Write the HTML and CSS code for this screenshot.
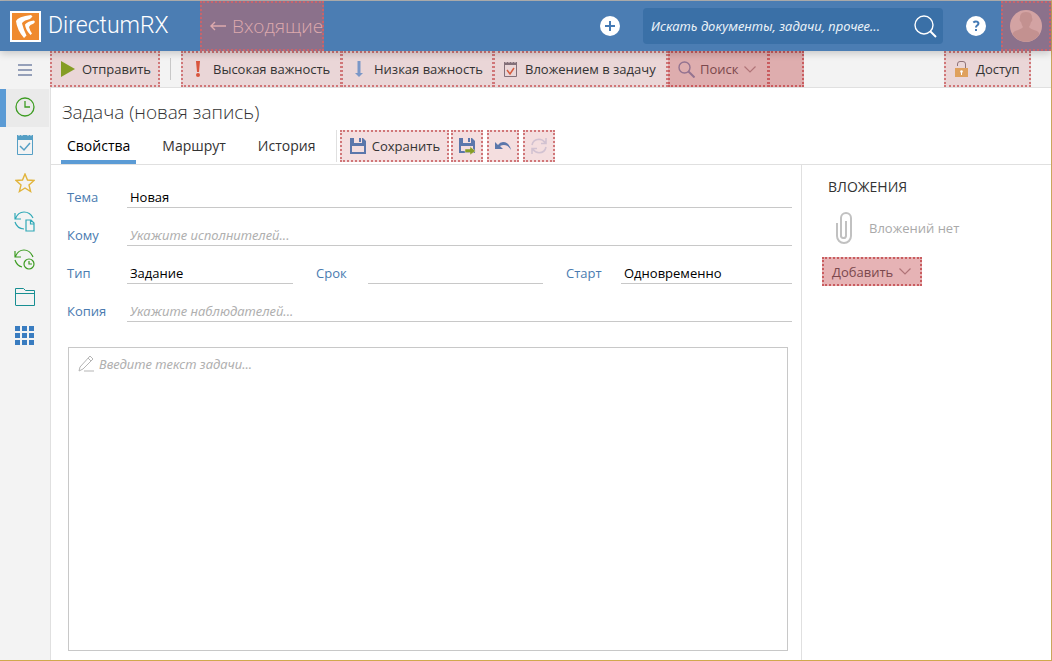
FILE: index.html
```html
<!DOCTYPE html>
<html lang="ru">
<head>
<meta charset="utf-8">
<title>DirectumRX</title>
<link rel="stylesheet" href="styles.css">
</head>
<body>
<div class="app">
  <header class="header">
    <a class="brand" href="#">
      <svg class="brand-logo" width="31" height="31" viewBox="0 0 31 31"><rect width="31" height="31" fill="#fff"/><rect x="2" y="2" width="27" height="27" fill="#ef8a2f"/><path d="M6 10Q8 5.500 21 4L22.500 5.500Q21 8 17 9Q13 10 12 12.500Q14 20 16.500 24.500L14 27Q7 19 6 10Z" fill="#fff"/><path d="M15 13.500Q18 10 24 9.500L25 11Q24 13 20.500 14L19 16Q20 20 22 22.500L20.500 24Q15.500 19 15 13.500Z" fill="#fff"/></svg>
      <span class="brand-name">DirectumRX</span>
    </a>
    <a class="back mark" href="#"><svg width="16" height="10" viewBox="0 0 16 10" fill="none" stroke="#dda9ad" stroke-width="1.400"><path d="M16 5H1M5 1L1 5l4 4"/></svg>Входящие</a>
    <div class="header-tools">
      <button class="icon-button" aria-label="Создать"><svg width="20" height="20" viewBox="0 0 20 20"><circle cx="10" cy="10" r="10" fill="#fff"/><path d="M10 5v10M5 10h10" stroke="#447ab5" stroke-width="2"/></svg></button>
      <div class="search">
        <input class="search-input" type="text" aria-label="Поиск" placeholder="Искать документы, задачи, прочее...">
        <svg width="23" height="23" viewBox="0 0 23 23" fill="none" stroke="#fff"><circle cx="10" cy="10" r="9" stroke-width="1.4"/><path d="M16 16L22 22" stroke-width="2"/></svg>
      </div>
      <button class="icon-button" aria-label="Справка"><svg width="20" height="20" viewBox="0 0 20 20"><circle cx="10" cy="10" r="10" fill="#fff"/><path d="M7.3 6.5Q9 5 11 5.6Q13 6.5 12.2 8.3Q11.800 9.200 10.600 9.900Q10 10.400 10 11.500" fill="none" stroke="#447ab5" stroke-width="2"/><path d="M9 13h2v2H9z" fill="#447ab5"/></svg></button>
    </div>
    <button class="profile mark" aria-label="Профиль"><svg width="32" height="32" viewBox="0 0 32 32"><circle cx="16" cy="16" r="16" fill="#d3a3a3"/><path d="M16 2C11 2 10 5 10 8C9 9 10 12 11 12Q12 16 13 17Q12 19 5 21Q2 23 3 25A16 16 0 0 0 29 25Q30 23 27 21Q20 19 19 17Q20 16 21 12C22 12 23 9 22 8C22 5 21 2 16 2Z" fill="#c39190"/></svg></button>
  </header>

  <div class="workspace">
    <nav class="sidebar" aria-label="Разделы">
      <button class="menu" aria-label="Меню"><svg width="14" height="12" viewBox="0 0 14 12"><path d="M0 1h14M0 6h14M0 11h14" stroke="#95a0b9" stroke-width="2"/></svg></button>
      <a class="nav-item nav-active" href="#" aria-label="Последние"><svg width="20" height="20" viewBox="0 0 20 20" fill="none" stroke="#3d9c22" stroke-width="1.300"><circle cx="10" cy="10" r="9"/><path d="M10 4v6h5"/></svg></a>
      <a class="nav-item" href="#" aria-label="Задания"><svg width="20" height="22" viewBox="0 0 20 22"><path d="M2 1h16v5H2z" fill="#559fc5"/><path d="M2.500 2v18.500h15V2" fill="none" stroke="#559fc5"/><path d="M5 12l4 4 6-7" fill="none" stroke="#559fc5" stroke-width="1.500"/><path d="M4 0v2M7 0v2M13 0v2M16 0v2" stroke="#f3f3f3"/></svg></a>
      <a class="nav-item" href="#" aria-label="Избранное"><svg width="20" height="20" viewBox="0 0 20 20"><path d="M10 1l2.500 6 6.500.5-5 4.500 1.600 6.500L10 15l-5.600 3.500L6 12 1 7.500 7.500 7z" fill="none" stroke="#e1b43b" stroke-width="1.400"/></svg></a>
      <a class="nav-item" href="#" aria-label="Последние документы"><svg width="21" height="21" viewBox="0 0 21 21" fill="none" stroke="#30a9b7" stroke-width="1.200"><path d="M1 2v6h6M1.500 7.500Q4 1 10 1T19 7M1 11Q3 17.500 10 18"/><path d="M12 9h5l3 3v8h-8zM16.500 9v4H20" stroke-width="1.200"/></svg></a>
      <a class="nav-item" href="#" aria-label="Последние задачи"><svg width="21" height="21" viewBox="0 0 21 21" fill="none" stroke="#3d9c22" stroke-width="1.200"><path d="M1 2v6h6M1.500 7.500Q4 1 10 1T19 8M1 11Q3 17 8 18"/><circle cx="15" cy="15" r="5"/><path d="M15 12v3h3"/></svg></a>
      <a class="nav-item" href="#" aria-label="Папки"><svg width="20" height="18" viewBox="0 0 20 18" fill="none" stroke="#178e92"><path d="M.5 17V.5h8L10.500 2.500h9V17.500H.5M.5 5.500h19"/></svg></a>
      <a class="nav-item" href="#" aria-label="Модули"><svg width="19" height="19" viewBox="0 0 19 19"><path d="M0 2.500h19M0 9.500h19M0 16.500h19" stroke="#397cc0" stroke-width="5" stroke-dasharray="5 2"/></svg></a>
    </nav>

    <div class="main">
      <div class="toolbar">
        <button class="tool mark tool-send"><svg width="14" height="16" viewBox="0 0 14 16"><path d="M0 0l14 8L0 16z" fill="#859d25"/></svg>Отправить</button>
        <span class="divider"></span>
        <button class="tool mark tool-high"><svg width="4" height="16" viewBox="0 0 4 16"><path d="M0 0h4L3 11H1z" fill="#d9553d"/><circle cx="2" cy="14" r="2" fill="#d9553d"/></svg>Высокая важность</button>
        <button class="tool mark tool-low"><svg width="8" height="16" viewBox="0 0 8 16"><path d="M2.500 0h3v12H8l-4 4-4-4h2.500z" fill="#7b97c7"/></svg>Низкая важность</button>
        <button class="tool mark tool-attach"><svg width="13" height="16" viewBox="0 0 13 16"><path d="M.5 1.500h12v14H.5z" fill="none" stroke="#836f78"/><path d="M0 1h13v3H0z" fill="#836f78"/><path d="M2 0v2M5 0v2M8 0v2M11 0v2" stroke="#ead6d7" stroke-width="1"/><path d="M3 9l3 4 4-6" fill="none" stroke="#d65c3f" stroke-width="1.500"/></svg>Вложением в задачу</button>
        <button class="tool mark tool-search strong"><svg width="17" height="17" viewBox="0 0 17 17" fill="none" stroke="#947390"><circle cx="6.500" cy="6.500" r="5.500" stroke-width="1.400"/><path d="M10.500 10.500l6 6" stroke-width="2"/></svg>Поиск<svg class="chevron" width="12" height="7" viewBox="0 0 12 7"><path d="M.5.5L6 6 11.500.5" fill="none" stroke="#b07478" stroke-width="1.200"/></svg></button>
        <button class="tool mark tool-empty strong" aria-label="Ещё"></button>
        <button class="tool mark tool-access"><svg width="13" height="16" viewBox="0 0 13 16"><path d="M0 7h13v9H0z" fill="#dfa15d"/><path d="M2.500 5V3Q2.500.5 5 .5h3q2.500 0 2.500 2.500v4" fill="none" stroke="#8f7378"/><circle cx="6.500" cy="10.500" r="1.300" fill="#fff"/><path d="M6.500 11v3" stroke="#fff"/></svg>Доступ</button>
      </div>

      <section class="card">
        <h1 class="title">Задача (новая запись)</h1>
        <div class="tabs">
          <button class="tab tab-active">Свойства</button>
          <button class="tab">Маршрут</button>
          <button class="tab">История</button>
          <div class="actions">
            <button class="action action-save mark"><svg width="16" height="16" viewBox="0 0 16 16"><path d="M0 0h13l3 3v13H0z" fill="#5b77ab"/><path d="M4 0h8v5H4zM2 8h12v6H2z" fill="#f4dedf"/><path d="M9 0h2v4H9z" fill="#5b77ab"/></svg>Сохранить</button>
            <button class="action mark" aria-label="Сохранить и закрыть"><svg width="17" height="17" viewBox="0 0 17 17"><path d="M0 0h13l3 3v12H0z" fill="#5b77ab"/><path d="M4 0h8v5H4zM2 8h12v5H2z" fill="#f4dedf"/><path d="M9 0h2v4H9z" fill="#5b77ab"/><path d="M6 11h5V8.500l5.500 4.500-5.500 4v-2.500H6z" fill="#859d25" stroke="#f4dedf" stroke-width=".5"/></svg></button>
            <button class="action action-gap mark" aria-label="Отменить"><svg width="17" height="10" viewBox="0 0 17 10"><path d="M0 1v7h8L5 5Q12 2 16 9Q14 1 8 1Q5 1 3 4z" fill="#5b77ab"/></svg></button>
            <button class="action action-gap mark" aria-label="Обновить"><svg width="16" height="16" viewBox="0 0 16 16" fill="none" stroke="#d2c2d1" stroke-width="1.600"><path d="M1 7Q2 1.500 8 1.200Q11.500 1.200 14.500 5M10 5.500h5V0M15 9Q14 14.500 8 14.800Q4.500 14.800 1.500 11M6 10.500H1V16"/></svg></button>
          </div>
        </div>

        <div class="columns">
          <form class="form">
            <div class="fields">
              <label for="subject">Тема</label><input class="wide" id="subject" type="text" value="Новая">
              <label for="to">Кому</label><input class="wide" id="to" type="text" placeholder="Укажите исполнителей...">
              <label for="kind">Тип</label><select id="kind"><option>Задание</option></select>
              <label class="inner" for="due">Срок</label><input id="due" type="text">
              <label class="inner" for="start">Старт</label><select id="start"><option>Одновременно</option></select>
              <label for="copy">Копия</label><input class="wide" id="copy" type="text" placeholder="Укажите наблюдателей...">
            </div>
            <div class="note">
              <svg width="17" height="17" viewBox="0 0 17 17" fill="none" stroke="#b5b5b5"><path d="M1 16l1-4L12 1l3 3L5 14zM10 3l3 3M6 16h10"/></svg>
              <textarea aria-label="Текст задачи" placeholder="Введите текст задачи..."></textarea>
            </div>
          </form>
          <aside class="attachments">
            <h2>ВЛОЖЕНИЯ</h2>
            <div class="empty"><svg width="16" height="32" viewBox="0 0 16 32" fill="none" stroke="#c1c1c1" stroke-width="2"><path d="M1 11v13a7 7 0 0 0 14 0V6a5 5 0 0 0-10 0v17a2.500 2.500 0 0 0 5 1V9"/></svg><span>Вложений нет</span></div>
            <button class="add mark strong">Добавить<svg width="12" height="7" viewBox="0 0 12 7"><path d="M.5.5L6 6 11.500.5" fill="none" stroke="#b07478" stroke-width="1.200"/></svg></button>
          </aside>
        </div>
      </section>
    </div>
  </div>
</div>
</body>
</html>
```
FILE: styles.css
```css
* { box-sizing: border-box; }
body { margin: 0; background: #fff; color: #333; font: 13px/18px "Open Sans", "Noto Sans", sans-serif; }
button, input, select, textarea { margin: 0; padding: 0; border: 0; border-radius: 0; background: none; color: inherit; font: inherit; outline: 0; }
a { color: inherit; text-decoration: none; }
svg { display: block; flex: none; }
.app { display: flex; flex-direction: column; min-height: 100vh; border-top: 1px solid #b3b3b3; border-right: 1px solid #c9a65c; border-bottom: 1px solid #d0a94d; }

.mark { border: 2px dotted #d07678; background: #ead6d7; }
.strong.mark { border-color: #c95c5f; background: #deadae; color: #7b484d; }

.header { display: flex; height: 50px; background: #4b7db3; color: #fff; position: relative; box-shadow: 0 2px 8px rgba(0, 0, 0, .2); }
.brand { display: flex; align-items: center; gap: 7px; width: 200px; padding-left: 10px; }
.brand-name { font: 300 23px/30px Roboto, sans-serif; }
.back.mark { display: flex; align-items: center; gap: 6px; width: 124px; padding-left: 8px; white-space: nowrap; border-color: #c9636b; background: #8b718b; color: #dda9ad; font-size: 19px; font-weight: 300; }
.header-tools { display: flex; align-items: center; gap: 23px; margin-left: auto; padding-right: 15px; }
.search { display: flex; align-items: center; width: 300px; height: 36px; padding: 0 6px 0 8px; border-radius: 4px; background: #3a70a7; }
.search-input { flex: 1; min-width: 0; font-family: "Noto Sans", sans-serif; font-style: italic; }
.search-input::placeholder { color: #e9f0f7; opacity: 1; }
.profile.mark { display: flex; align-items: center; justify-content: center; width: 50px; border-color: #c9636b; background: #8b718b; }

.workspace { display: flex; flex: 1; }
.sidebar { display: flex; flex-direction: column; width: 51px; padding-right: 1px; border-right: 1px solid #e0e0e0; background: #f3f3f3; }
.menu { display: flex; align-items: center; justify-content: center; height: 38px; }
.nav-item { display: flex; align-items: center; justify-content: center; height: 38px; padding-bottom: 2px; }
.nav-active { padding-right: 6px; border-left: 6px solid #5b9bd5; background: #eaeaea; }
.main { display: flex; flex: 1; flex-direction: column; min-width: 0; }
.toolbar { display: flex; height: 37px; border-bottom: 1px solid #e0e0e0; background: #f3f3f3; margin-left: -1px; padding-right: 20px; }
.tool { display: flex; align-items: center; gap: 6px; height: 36px; padding: 0 9px; white-space: nowrap; }
.tool-send { width: 110px; gap: 7px; }
.divider { width: 1px; height: 22px; margin: 7px 10px; background: #c8c8c8; }
.tool-high { width: 161px; padding-left: 13px; gap: 13px; }
.tool-low { width: 153px; margin-left: -1px; padding-left: 12px; gap: 11px; }
.tool-attach { width: 175px; margin-left: -1px; gap: 8px; }
.tool-search { width: 101px; padding: 0 8px; gap: 5px; }
.tool-empty { width: 36px; margin-left: -1px; }
.tool-access { width: 87px; margin-left: auto; gap: 8px; }

.card { display: flex; flex: 1; flex-direction: column; }
.title { margin: 0; padding: 9px 11px 0; color: #333; font-size: 19px; font-weight: 300; line-height: 30px; }
.tabs { display: flex; gap: 20px; height: 38px; padding-left: 10px; border-bottom: 1px solid #e0e0e0; }
.tab { height: 37px; padding: 4px 6px 0; border-bottom: 4px solid transparent; font-size: 14px; }
.tab-active { border-color: #5b9bd5; color: #000; }
.actions { display: flex; gap: 2px; height: 32px; margin-top: 3px; margin-left: -5px; padding-left: 3px; border-left: 1px solid #e0e0e0; }
.action { display: flex; align-items: center; justify-content: center; gap: 6px; width: 32px; height: 32px; }
.action.mark { background: #f4dedf; }
.action-save { width: 109px; }
.action-gap { margin-left: 2px; }

.columns { display: flex; flex: 1; }
.form { display: flex; flex: 1; flex-direction: column; min-width: 0; padding: 19px 9px 9px 16px; }
.fields { display: grid; grid-template-columns: 60px 166fr 75px 175fr 78px 171fr; row-gap: 14px; }
.fields label { height: 24px; color: #4a7bb0; line-height: 26px; }
.fields .inner { padding-left: 23px; }
.fields input, .fields select { min-width: 0; height: 24px; padding: 2px 3px 0; border-bottom: 1px solid #c8c8c8; appearance: none; color: #000; }
.fields .wide { grid-column: 2 / -1; }
.form input::placeholder, .note textarea::placeholder { color: #b0b0b0; font-family: "Noto Sans", sans-serif; font-style: italic; opacity: 1; }
.note { display: flex; flex: 1; gap: 4px; margin: 25px 4px 0 1px; padding: 7px 9px; border: 1px solid #c8c8c8; }
.note textarea { flex: 1; resize: none; }
.attachments { width: 250px; padding: 12px 20px; border-left: 1px solid #e0e0e0; }
.attachments h2 { margin: 0 6px; font-size: 14px; font-weight: 400; line-height: 20px; }
.empty { display: flex; align-items: center; gap: 17px; margin: 15px 14px 13px; color: #aaa; }
.add { display: flex; align-items: center; gap: 6px; width: 100px; height: 29px; padding: 0 8px; }
.add.mark.strong { background: #e6b3b5; }
```
